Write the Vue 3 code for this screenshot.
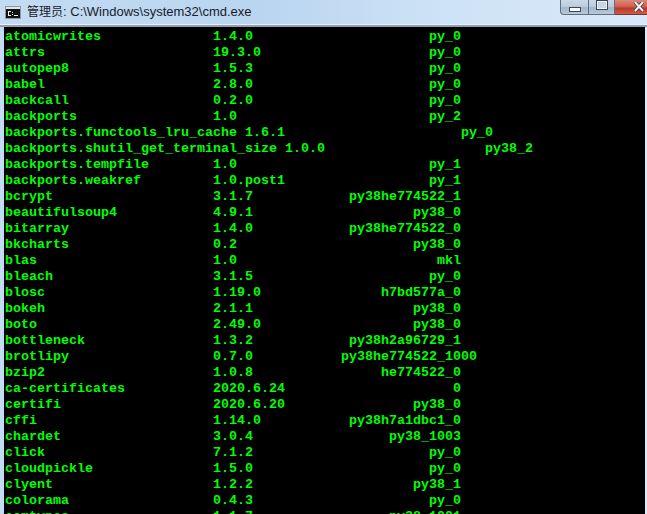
<script setup>
const rows = [
  ['atomicwrites', '1.4.0', 'py_0'],
  ['attrs', '19.3.0', 'py_0'],
  ['autopep8', '1.5.3', 'py_0'],
  ['babel', '2.8.0', 'py_0'],
  ['backcall', '0.2.0', 'py_0'],
  ['backports', '1.0', 'py_2'],
  ['backports.functools_lru_cache', '1.6.1', 'py_0', 61],
  ['backports.shutil_get_terminal_size', '1.0.0', 'py38_2', 66],
  ['backports.tempfile', '1.0', 'py_1'],
  ['backports.weakref', '1.0.post1', 'py_1'],
  ['bcrypt', '3.1.7', 'py38he774522_1'],
  ['beautifulsoup4', '4.9.1', 'py38_0'],
  ['bitarray', '1.4.0', 'py38he774522_0'],
  ['bkcharts', '0.2', 'py38_0'],
  ['blas', '1.0', 'mkl'],
  ['bleach', '3.1.5', 'py_0'],
  ['blosc', '1.19.0', 'h7bd577a_0'],
  ['bokeh', '2.1.1', 'py38_0'],
  ['boto', '2.49.0', 'py38_0'],
  ['bottleneck', '1.3.2', 'py38h2a96729_1'],
  ['brotlipy', '0.7.0', 'py38he774522_1000', 59],
  ['bzip2', '1.0.8', 'he774522_0'],
  ['ca-certificates', '2020.6.24', '0'],
  ['certifi', '2020.6.20', 'py38_0'],
  ['cffi', '1.14.0', 'py38h7a1dbc1_0'],
  ['chardet', '3.0.4', 'py38_1003'],
  ['click', '7.1.2', 'py_0'],
  ['cloudpickle', '1.5.0', 'py_0'],
  ['clyent', '1.2.2', 'py38_1'],
  ['colorama', '0.4.3', 'py_0'],
  ['comtypes', '1.1.7', 'py38_1001'],
]
const lines = rows.map(([name, version, build, end = 57]) => {
  const head = name.padEnd(25) + ' ' + version
  return head.padEnd(end - build.length) + build
})
</script>

<template>
  <div class="window">
    <header class="titlebar">
      <svg class="app-icon" width="16" height="13" viewBox="0 0 16 13">
        <rect x="0.5" y="0.5" width="15" height="12" fill="#111" stroke="#8f969e" />
        <rect x="1" y="1" width="14" height="2" fill="#dfe8f2" />
        <path d="M3 5h3v1H3zM3 6h1v3H3zM3 9h3v1H3zM7 6h1v1H7zM7 8h1v1H7zM9 9h4v1H9z" fill="#f0f0f0" />
      </svg>
      <span class="title"><span class="title-cjk">管理员</span>: C:\Windows\system32\cmd.exe</span>
      <div class="controls">
        <button class="ctl ctl-min"><i class="min-glyph"></i></button>
        <button class="ctl ctl-max"><i class="max-glyph"></i></button>
        <button class="ctl ctl-close">
          <svg width="12" height="10" viewBox="0 0 12 10">
            <path d="M2 0 L10 9 M10 0 L2 9" stroke="#3d3f48" stroke-width="3.6" />
            <path d="M2 0 L10 9 M10 0 L2 9" stroke="#f2f2f2" stroke-width="2" />
          </svg>
        </button>
      </div>
    </header>
    <main class="console">
      <pre v-for="(line, i) in lines" :key="i" class="line">{{ line }}</pre>
    </main>
  </div>
</template>

<style scoped>
.window {
  width: 647px;
  height: 514px;
  overflow: hidden;
  display: flex;
  flex-direction: column;
  background: linear-gradient(90deg, #c4dcf3 0%, #b9d5f0 40%, #cfe3f6 70%, #d8e8f8 100%);
  font-family: "Liberation Sans", "Noto Sans CJK SC", sans-serif;
}
.titlebar {
  height: 25px;
  flex: none;
  display: flex;
  align-items: flex-start;
  border-bottom: 2px solid #8ea0b4;
  box-shadow: inset 0 -1px 0 #e6f0fa;
}
.app-icon {
  margin: 6px 0 0 5px;
  flex: none;
}
.title {
  margin: 3px 0 0 6px;
  font-size: 13px;
  line-height: 16px;
  color: #1a2028;
  white-space: nowrap;
}
.title-cjk {
  font-family: "Noto Sans CJK SC", sans-serif;
  font-size: 12px;
}
.controls {
  margin-left: auto;
  display: flex;
  height: 15px;
  flex: none;
}
.ctl {
  padding: 0;
  border: 1px solid #5f6d7e;
  border-top: 0;
  display: flex;
  align-items: center;
  justify-content: center;
  background: linear-gradient(180deg, #c9d8e8 0%, #bccddf 45%, #a3b6ca 55%, #b8c9da 100%);
}
.ctl-min {
  width: 28px;
  border-bottom-left-radius: 4px;
  border-right: 0;
}
.ctl-max {
  width: 27px;
}
.ctl-close {
  width: 32px;
  border-left: 0;
  border-right: 0;
  border-color: #6f3a35;
  padding-left: 16px;
  background: linear-gradient(180deg, #d88a7c 0%, #d4604f 45%, #b93a2a 60%, #cf5a46 100%);
}
.min-glyph {
  display: block;
  width: 12px;
  height: 5px;
  margin-top: 4px;
  box-sizing: border-box;
  background: #fff;
  border: 1px solid #39465a;
}
.max-glyph {
  display: block;
  width: 12px;
  height: 10px;
  margin-top: -4px;
  box-sizing: border-box;
  background: #c8d6e4;
  border: 2px solid #f0f4f8;
  outline: 1px solid #39465a;
  outline-offset: -1px;
}
.console {
  flex: 1;
  min-height: 0;
  margin: 0 2px 0 4px;
  background: #000;
  padding: 2px 0 0 1px;
  overflow: hidden;
}
.line {
  margin: 0;
  height: 16px;
  line-height: 16px;
  font-family: "Liberation Mono", monospace;
  font-weight: 700;
  font-size: 13.333px;
  color: #00ff00;
  white-space: pre;
}
</style>

<style>
html, body { margin: 0; background: #fff; }
</style>
